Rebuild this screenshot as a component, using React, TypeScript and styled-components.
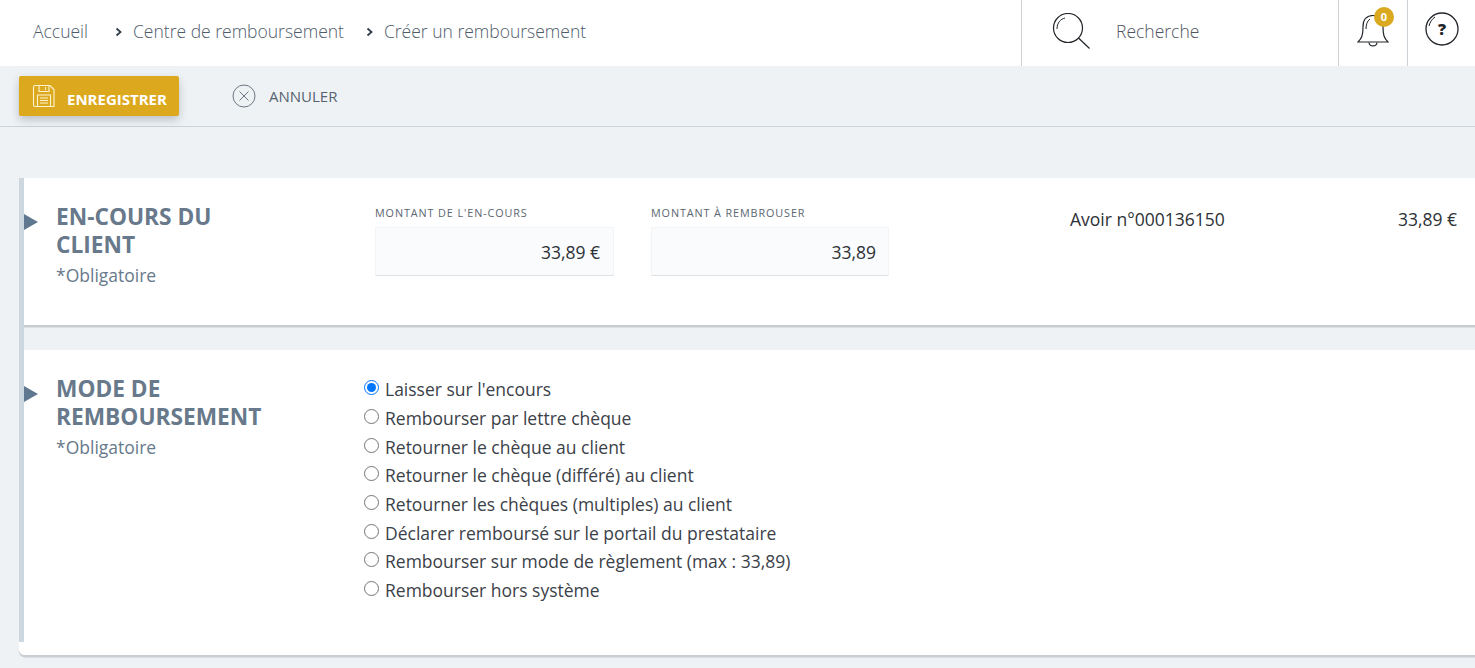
import React from 'react';
import styled, { createGlobalStyle } from 'styled-components';

const GlobalStyle = createGlobalStyle`
  html, body {
    margin: 0;
    padding: 0;
    background: #eef2f5;
    font-family: 'Open Sans', 'Liberation Sans', sans-serif;
    overflow: hidden;
  }
`;

const Page = styled.div`
  width: 1475px;
  height: 668px;
  overflow: hidden;
`;

const Header = styled.header`
  display: flex;
  align-items: stretch;
  height: 66px;
  background: #fff;
`;

const Breadcrumb = styled.nav`
  flex: 1;
  display: flex;
  align-items: center;
  padding: 0 0 4px 33px;
  font-size: 17.5px;
  font-weight: 300;
  color: #4f5d6b;
`;

const Crumb = styled.span<{ $first?: boolean }>`
  display: flex;
  align-items: center;
  margin-left: ${({ $first }) => ($first ? '0' : '18px')};
  margin-right: ${({ $first }) => ($first ? '5px' : '0')};
`;

const Chevron = styled.svg`
  width: 8px;
  height: 10px;
  margin: 1px 10px 0 4px;
`;

const SearchBox = styled.div`
  width: 317px;
  display: flex;
  align-items: center;
  border-left: 1px solid #ccd1d5;
  padding: 0 0 4px 30px;
  box-sizing: border-box;
  font-size: 17.5px;
  font-weight: 300;
  color: #4f5560;
`;

const SearchIcon = styled.svg`
  width: 38px;
  height: 36px;
  margin: 0 26px 0 0;
`;

const IconCell = styled.div<{ $w: number; $pb: number }>`
  position: relative;
  width: ${({ $w }) => $w}px;
  display: flex;
  align-items: center;
  justify-content: center;
  border-left: 1px solid #ccd1d5;
  box-sizing: border-box;
  padding-bottom: ${({ $pb }) => $pb}px;
`;

const Badge = styled.span`
  position: absolute;
  top: 7px;
  left: 35px;
  width: 20px;
  height: 20px;
  border-radius: 50%;
  background: #dba91f;
  color: #fff;
  font-size: 11px;
  font-weight: 700;
  line-height: 20px;
  text-align: center;
`;

const ActionBar = styled.div`
  display: flex;
  align-items: flex-start;
  height: 61px;
  box-sizing: border-box;
  border-bottom: 1px solid #ccd3d9;
  padding: 10px 0 0 19px;
`;

const SaveButton = styled.button`
  display: flex;
  align-items: center;
  width: 160px;
  height: 40px;
  padding: 0 0 0 13px;
  box-sizing: border-box;
  border: none;
  border-radius: 2px;
  background: #dca91e;
  box-shadow: 0 4px 8px rgba(60, 70, 80, 0.28);
  color: #fff;
  font-family: inherit;
  font-size: 15px;
  font-weight: 700;
  line-height: 20px;
`;

const SaveLabel = styled.span`
  padding-top: 6px;
`;

const SaveIcon = styled.svg`
  width: 24px;
  height: 24px;
  margin-right: 11px;
`;

const CancelButton = styled.button`
  display: flex;
  align-items: center;
  height: 40px;
  margin: 0 0 0 53px;
  padding: 0;
  border: none;
  background: none;
  color: #56626f;
  font-family: inherit;
  font-size: 15px;
`;

const CancelIcon = styled.svg`
  width: 24px;
  height: 24px;
  margin: 0 13px 0 0;
`;

const CancelLabel = styled.span`
  margin-top: -1px;
`;

const Panel = styled.main`
  margin: 51px 0 0 19px;
  border-radius: 0 0 0 6px;
  box-shadow: 0 2.5px 0 #c9ced3;
  background: #fff;
`;

const Rail = styled.div`
  border-left: 5px solid #cdd7e0;
  background: #eef2f5;
`;

const Section = styled.section<{ $h: number; $gap?: boolean }>`
  position: relative;
  display: flex;
  height: ${({ $h }) => $h}px;
  box-sizing: border-box;
  background: #fff;
  margin-bottom: ${({ $gap }) => ($gap ? '25px' : '0')};
  box-shadow: ${({ $gap }) => ($gap ? '0 2.5px 0 #c9ced3' : 'none')};
`;

const Marker = styled.span`
  position: absolute;
  left: 0;
  top: 36px;
  border-style: solid;
  border-width: 8px 0 8px 14px;
  border-color: transparent transparent transparent #5f788f;
`;

const Heading = styled.div`
  width: 318px;
  flex-shrink: 0;
  padding: 25px 0 0 32px;
  box-sizing: border-box;
`;

const Title = styled.h2`
  margin: 0;
  max-width: 230px;
  font-size: 22.7px;
  line-height: 27.5px;
  font-weight: 700;
  color: #67798a;
`;

const Hint = styled.p`
  margin: 5px 0 0;
  font-size: 17.5px;
  line-height: 25px;
  color: #67798a;
`;

const Fields = styled.div`
  display: flex;
  gap: 37px;
  padding: 28px 0 0 33px;
`;

const Field = styled.div<{ $w: number }>`
  width: ${({ $w }) => $w}px;
`;

const FieldLabel = styled.label`
  display: block;
  height: 21px;
  font-size: 10.8px;
  line-height: 14px;
  letter-spacing: 0.9px;
  color: #5c6672;
`;

const FieldValue = styled.div<{ $pr: number }>`
  height: 49px;
  box-sizing: border-box;
  padding-right: ${({ $pr }) => $pr}px;
  background: #fafbfd;
  border: 1px solid #f2f4f6;
  border-bottom: 1px solid #dfe2e5;
  font-size: 17.5px;
  line-height: 49px;
  text-align: right;
  color: #2d3136;
`;

const Credit = styled.div`
  position: absolute;
  top: 29px;
  left: 1046px;
  width: 387px;
  display: flex;
  justify-content: space-between;
  font-size: 17.5px;
  line-height: 24px;
  color: #2d3136;
`;

const RadioList = styled.div`
  display: flex;
  flex-direction: column;
  padding: 25px 0 0 22px;
`;

const RadioRow = styled.label`
  display: flex;
  align-items: center;
  height: 28.7px;
  font-size: 17.5px;
  color: #3b4148;
`;

const Radio = styled.input`
  width: 15px;
  height: 15px;
  margin: -3px 6px 0 0;
`;

const PanelFoot = styled.div`
  height: 13px;
  background: #fff;
  border-radius: 0 0 0 6px;
`;

const options = [
  "Laisser sur l'encours",
  'Rembourser par lettre chèque',
  'Retourner le chèque au client',
  'Retourner le chèque (différé) au client',
  'Retourner les chèques (multiples) au client',
  'Déclarer remboursé sur le portail du prestataire',
  'Rembourser sur mode de règlement (max : 33,89)',
  'Rembourser hors système',
];

const ChevronMark = () => (
  <Chevron viewBox="0 0 8 10">
    <path d="M1.5 1.5 L5.5 5 L1.5 8.5" fill="none" stroke="#2f3e4e" strokeWidth="1.8" />
  </Chevron>
);

const App: React.FC = () => {
  return (
    <Page>
      <GlobalStyle />
      <Header>
        <Breadcrumb>
          <Crumb $first>Accueil</Crumb>
          <Crumb><ChevronMark />Centre de remboursement</Crumb>
          <Crumb><ChevronMark />Créer un remboursement</Crumb>
        </Breadcrumb>
        <SearchBox>
          <SearchIcon viewBox="0 0 38 36" fill="none" stroke="#22262b" strokeWidth="1.2">
            <circle cx="16" cy="15" r="14.5" />
            <path d="M26.5 25 L37.5 35.5" />
            <path d="M5 16 C5 10 8.5 6 13 5" strokeWidth="1" />
          </SearchIcon>
          Recherche
        </SearchBox>
        <IconCell $w={69} $pb={3}>
          <svg width="32" height="34" viewBox="0 0 32 34" fill="none" stroke="#22262b" strokeWidth="1.2">
            <path d="M1 27 C5 23 6 20 6 12 C6 4 10 0.5 16 0.5 C22 0.5 26 4 26 12 C26 20 27 23 31 27 Z" />
            <path d="M12 27.5 C12.5 32 19.5 32 20 27.5" />
            <path d="M9 14 C9 10 10 6 13 4" strokeWidth="1" />
          </svg>
          <Badge>0</Badge>
        </IconCell>
        <IconCell $w={68} $pb={9}>
          <svg width="34" height="34" viewBox="0 0 34 34" fill="none">
            <circle cx="17" cy="17" r="16" stroke="#22262b" strokeWidth="1.3" />
            <path d="M4 14 C5 10 7 7 10 5" stroke="#22262b" strokeWidth="1" />
            <text x="17" y="23" textAnchor="middle" fontFamily="Open Sans" fontWeight="800" fontSize="16" fill="#22262b">?</text>
          </svg>
        </IconCell>
      </Header>
      <ActionBar>
        <SaveButton>
          <SaveIcon viewBox="0 0 24 24" fill="none" stroke="#fff3cf" strokeWidth="1.1">
            <path d="M3 1.5 H18 L22 5.5 V22.5 H3 C2 22.5 1.5 22 1.5 21 V3 C1.5 2 2 1.5 3 1.5 Z" />
            <path d="M7 1.5 V7.5 H17 V1.5" />
            <path d="M13.5 3 V6" />
            <path d="M5.5 22.5 V11 H18.5 V22.5" />
            <path d="M8 14 H16 M8 16.5 H16 M8 19 H16" />
          </SaveIcon>
          <SaveLabel>ENREGISTRER</SaveLabel>
        </SaveButton>
        <CancelButton>
          <CancelIcon viewBox="0 0 24 24" fill="none" stroke="#5d6875" strokeWidth="0.9">
            <circle cx="12" cy="12" r="11" />
            <path d="M7.5 7.5 L16.5 16.5 M16.5 7.5 L7.5 16.5" />
          </CancelIcon>
          <CancelLabel>ANNULER</CancelLabel>
        </CancelButton>
      </ActionBar>
      <Panel>
        <Rail>
          <Section $h={147} $gap>
            <Marker />
            <Heading>
              <Title>EN-COURS DU CLIENT</Title>
              <Hint>*Obligatoire</Hint>
            </Heading>
            <Fields>
              <Field $w={239}>
                <FieldLabel>MONTANT DE L'EN-COURS</FieldLabel>
                <FieldValue $pr={13}>33,89 €</FieldValue>
              </Field>
              <Field $w={238}>
                <FieldLabel>MONTANT À REMBROUSER</FieldLabel>
                <FieldValue $pr={12}>33,89</FieldValue>
              </Field>
            </Fields>
            <Credit>
              <span>Avoir n°000136150</span>
              <span>33,89 €</span>
            </Credit>
          </Section>
          <Section $h={292}>
            <Marker />
            <Heading>
              <Title>MODE DE REMBOURSEMENT</Title>
              <Hint>*Obligatoire</Hint>
            </Heading>
            <RadioList>
              {options.map((label, i) => (
                <RadioRow key={label}>
                  <Radio type="radio" name="mode" defaultChecked={i === 0} />
                  {label}
                </RadioRow>
              ))}
            </RadioList>
          </Section>
        </Rail>
        <PanelFoot />
      </Panel>
    </Page>
  );
};

export default App;
